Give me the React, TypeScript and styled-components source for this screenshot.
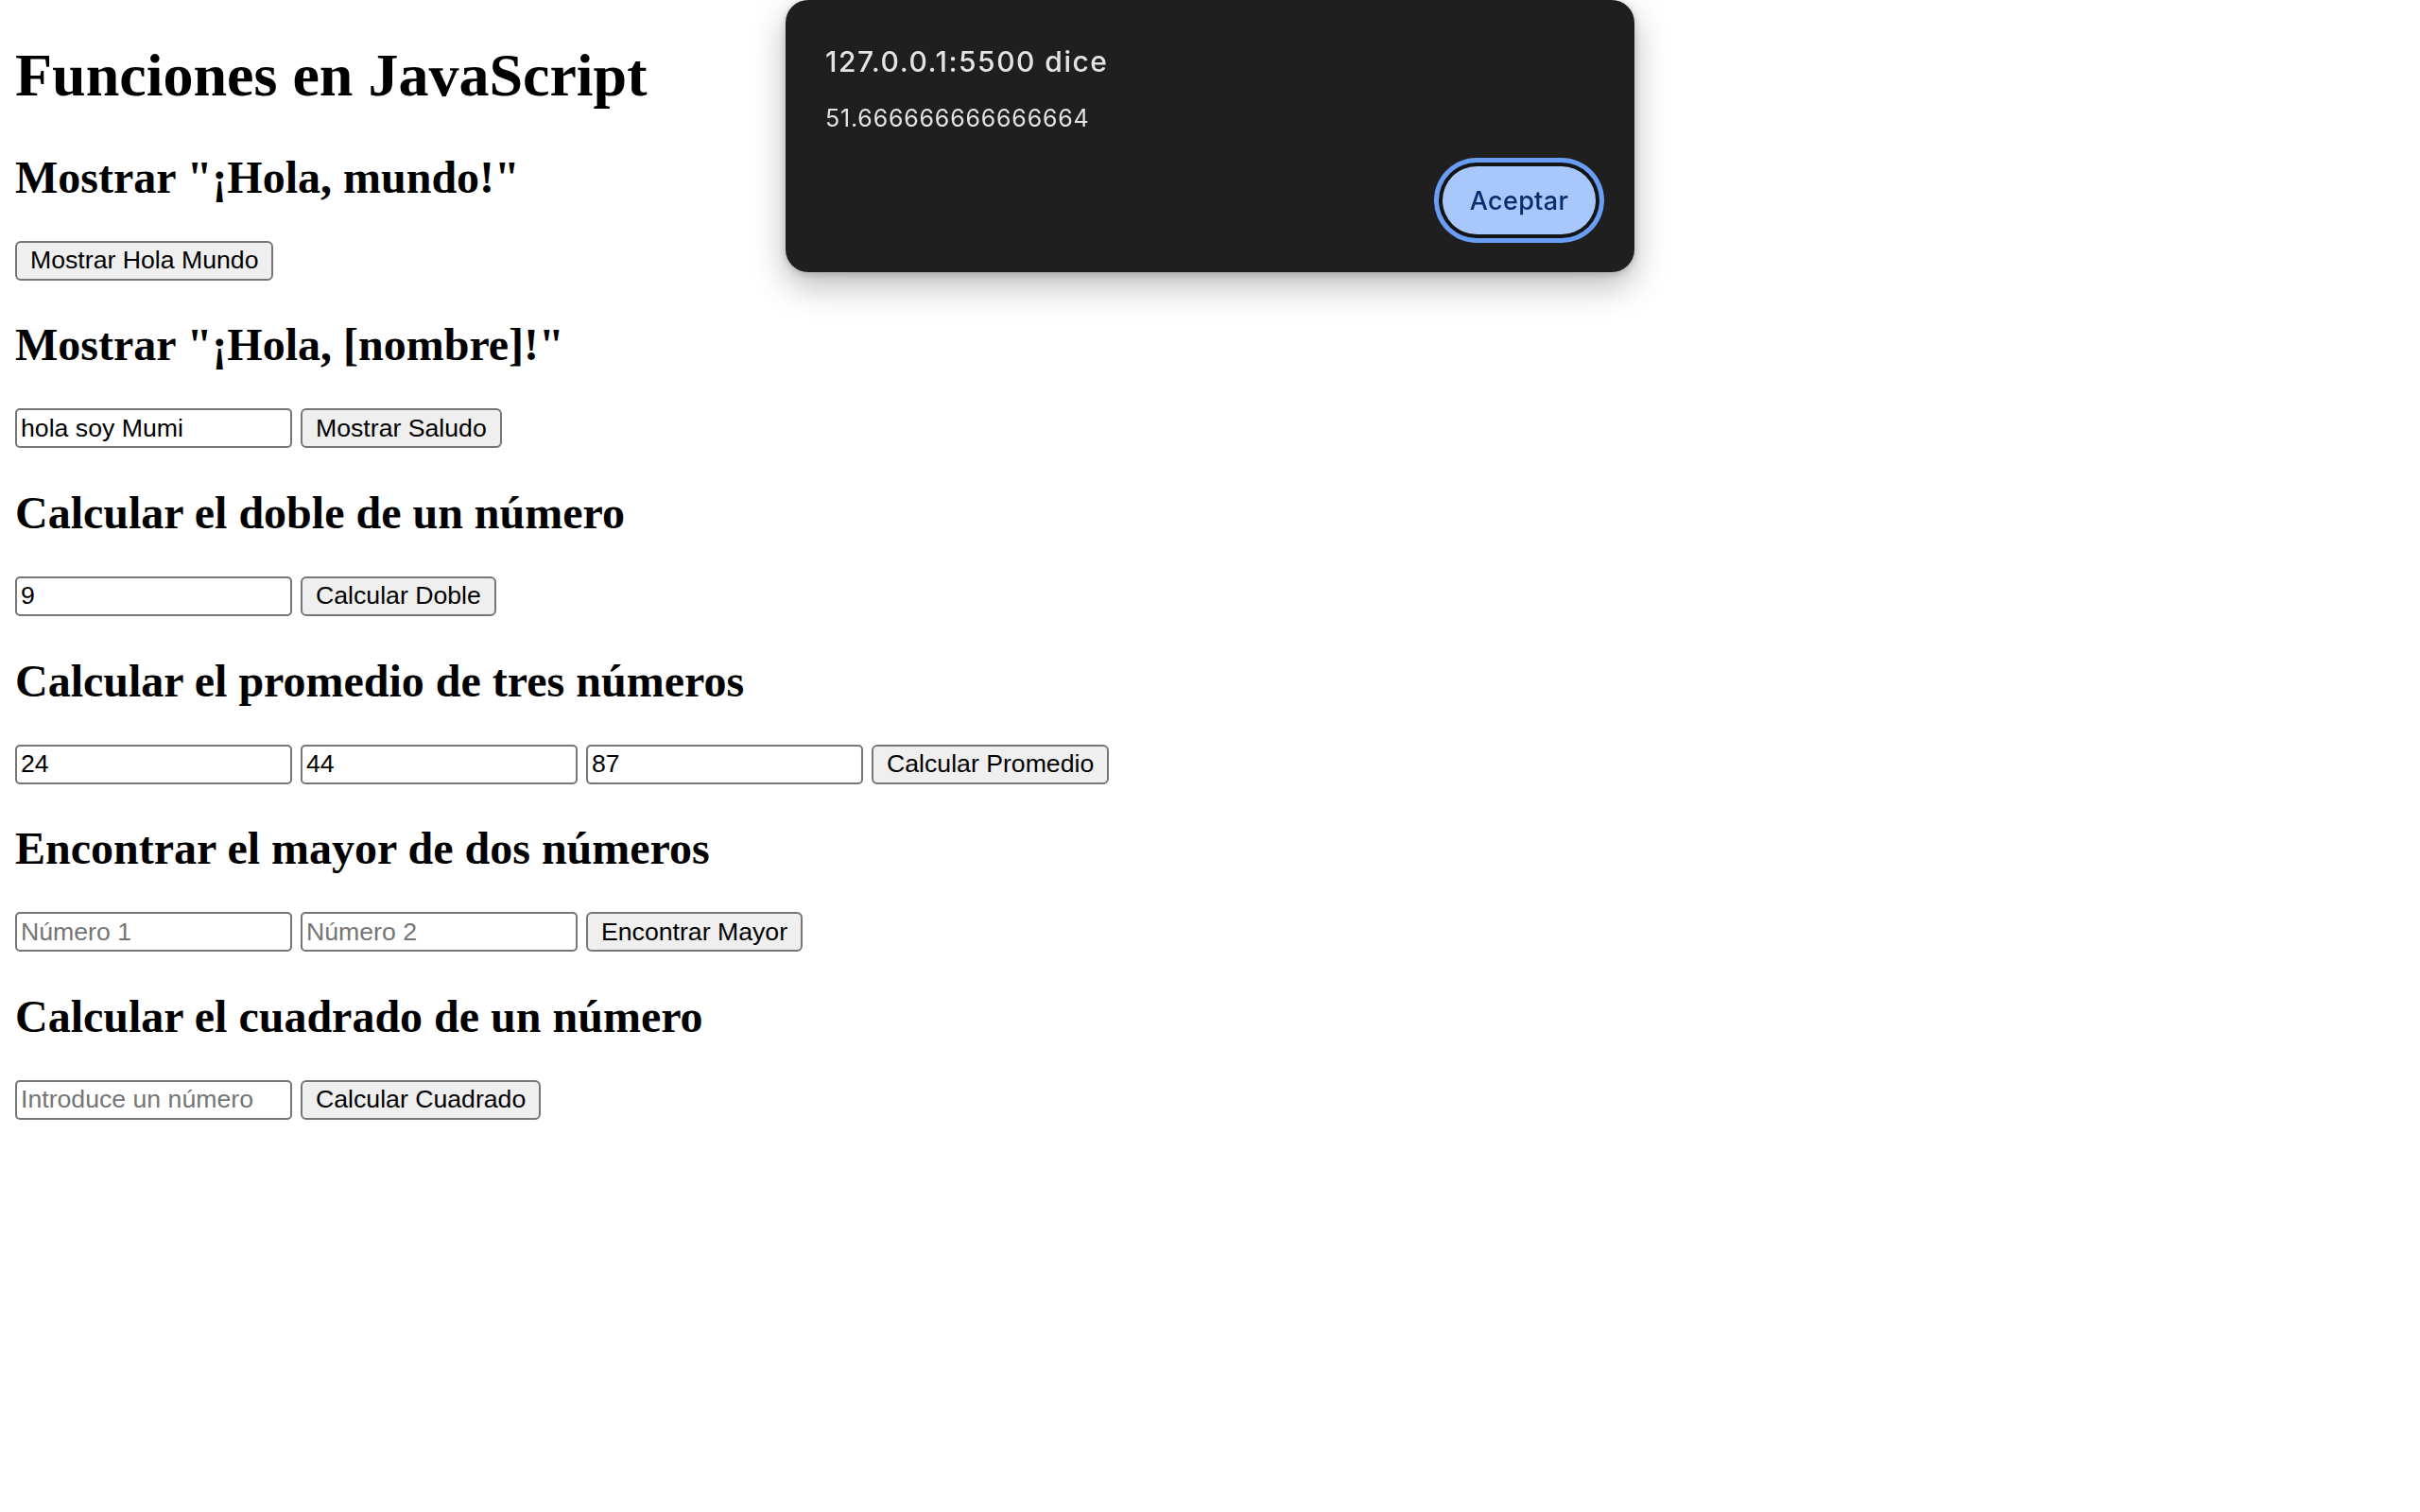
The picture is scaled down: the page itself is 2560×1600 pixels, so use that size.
import React from "react";
import styled, { createGlobalStyle } from "styled-components";

const GlobalStyle = createGlobalStyle`
  html, body {
    margin: 0;
    padding: 0;
    background: #ffffff;
  }
  body {
    font-family: "Liberation Serif", "Times New Roman", serif;
    color: #000;
  }
`;

const Page = styled.main`
  display: block;
  padding: 0 16px;
`;

const Title = styled.h1`
  font-family: "Liberation Serif", "Times New Roman", serif;
  font-size: 64px;
  font-weight: 700;
  line-height: normal;
  margin: 42.88px 0;
`;

const SectionTitle = styled.h2`
  font-family: "Liberation Serif", "Times New Roman", serif;
  font-size: 48px;
  font-weight: 700;
  line-height: normal;
  margin: 39.84px 0;
`;

const Row = styled.div`
  display: flex;
  align-items: flex-start;
  gap: 9px;
  height: 43px;
`;

const TextField = styled.input`
  box-sizing: border-box;
  width: 293px;
  height: 42px;
  margin: 0;
  padding: 2px 4px;
  border: 2px solid #767676;
  border-radius: 5px;
  background: #ffffff;
  color: #000;
  font-family: "Liberation Sans", Arial, sans-serif;
  font-size: 26.67px;
  outline: none;
  &::placeholder {
    color: #757575;
    opacity: 1;
  }
`;

const Button = styled.button`
  box-sizing: border-box;
  height: 42px;
  margin: 0;
  padding: 0 14px;
  border: 2px solid #767676;
  border-radius: 6px;
  background: #efefef;
  color: #000;
  font-family: "Liberation Sans", Arial, sans-serif;
  font-size: 26.67px;
  white-space: nowrap;
  cursor: default;
`;

const Dialog = styled.div`
  position: fixed;
  top: 0;
  left: 831px;
  box-sizing: border-box;
  width: 898px;
  height: 288px;
  padding: 47px 41px 40px 42px;
  background: #1f1f1f;
  border-radius: 24px;
  box-shadow: 0 14px 36px rgba(0, 0, 0, 0.28), 0 2px 8px rgba(0, 0, 0, 0.18);
  display: flex;
  flex-direction: column;
  font-family: Inter, "Noto Sans", sans-serif;
`;

const DialogTitle = styled.div`
  font-size: 30px;
  font-weight: 500;
  line-height: 36px;
  letter-spacing: 1.5px;
  color: #e3e3e3;
`;

const DialogMessage = styled.div`
  margin-top: 26px;
  font-size: 25px;
  font-weight: 400;
  line-height: 32px;
  letter-spacing: 0.8px;
  color: #e3e3e3;
`;

const DialogActions = styled.div`
  margin-top: auto;
  display: flex;
  justify-content: flex-end;
`;

const PrimaryButton = styled.button`
  box-sizing: border-box;
  width: 162px;
  height: 72px;
  border: none;
  border-radius: 36px;
  background: #a8c7fa;
  color: #062e6f;
  font-family: Inter, "Noto Sans", sans-serif;
  font-size: 27px;
  font-weight: 500;
  letter-spacing: 0.3px;
  box-shadow: 0 0 0 4px #141414, 0 0 0 9px #6a9ef5;
  cursor: default;
`;

export default function App() {
  return (
    <>
      <GlobalStyle />
      <Page>
        <Title>Funciones en JavaScript</Title>

        <SectionTitle>Mostrar "¡Hola, mundo!"</SectionTitle>
        <Row>
          <Button>Mostrar Hola Mundo</Button>
        </Row>

        <SectionTitle>Mostrar "¡Hola, [nombre]!"</SectionTitle>
        <Row>
          <TextField type="text" defaultValue="hola soy Mumi" />
          <Button>Mostrar Saludo</Button>
        </Row>

        <SectionTitle>Calcular el doble de un número</SectionTitle>
        <Row>
          <TextField type="text" defaultValue="9" />
          <Button>Calcular Doble</Button>
        </Row>

        <SectionTitle>Calcular el promedio de tres números</SectionTitle>
        <Row>
          <TextField type="text" defaultValue="24" />
          <TextField type="text" defaultValue="44" />
          <TextField type="text" defaultValue="87" />
          <Button>Calcular Promedio</Button>
        </Row>

        <SectionTitle>Encontrar el mayor de dos números</SectionTitle>
        <Row>
          <TextField type="text" placeholder="Número 1" />
          <TextField type="text" placeholder="Número 2" />
          <Button>Encontrar Mayor</Button>
        </Row>

        <SectionTitle>Calcular el cuadrado de un número</SectionTitle>
        <Row>
          <TextField type="text" placeholder="Introduce un número" />
          <Button>Calcular Cuadrado</Button>
        </Row>
      </Page>

      <Dialog role="alertdialog">
        <DialogTitle>127.0.0.1:5500 dice</DialogTitle>
        <DialogMessage>51.666666666666664</DialogMessage>
        <DialogActions>
          <PrimaryButton>Aceptar</PrimaryButton>
        </DialogActions>
      </Dialog>
    </>
  );
}
